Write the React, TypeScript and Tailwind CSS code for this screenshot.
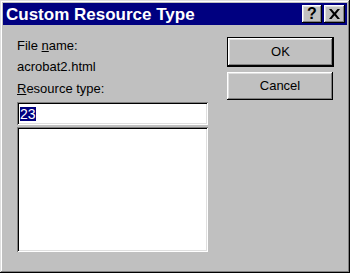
import React from "react";

const raised =
  "shadow-[inset_-1px_-1px_0_#000,inset_1px_1px_0_#fff,inset_-2px_-2px_0_#808080,inset_2px_2px_0_#dfdfdf]";

export default function App() {
  return (
    <div
      className="w-[350px] h-[273px] bg-[#c0c0c0] p-[3px] flex flex-col shadow-[inset_-1px_-1px_0_#000,inset_1px_1px_0_#dfdfdf,inset_-2px_-2px_0_#808080,inset_2px_2px_0_#fff]"
      style={{ fontFamily: '"Liberation Sans", Arial, sans-serif' }}
    >
      <div className="h-[22px] bg-[#000080] flex items-center pl-[3px] pr-[2px]">
        <span className="text-white font-bold text-[17px] leading-none">
          Custom Resource Type
        </span>
        <div className="ml-auto flex gap-[2px]">
          <div className={`w-[20px] h-[18px] bg-[#c0c0c0] ${raised} flex items-center justify-center text-black font-bold text-[16px] leading-none pb-[1px]`}>
            ?
          </div>
          <div className={`w-[21px] h-[18px] bg-[#c0c0c0] ${raised} flex items-center justify-center`}>
            <svg width="11" height="10" viewBox="0 0 11 10">
              <path d="M0 0h2.5l3 3.5 3-3.5H11L7 5l4 5H8.5l-3-3.5-3 3.5H0l4-5z" fill="#000" />
            </svg>
          </div>
        </div>
      </div>
      <div className="flex flex-1 pl-[14px] pt-[14px]">
        <div className="flex flex-col w-[191px] text-[13px] text-black leading-none">
          <div className="h-[13px]">
            File <span className="underline">n</span>ame:
          </div>
          <div className="h-[13px] mt-[8px]">acrobat2.html</div>
          <div className="h-[13px] mt-[9px]">
            <span className="underline">R</span>esource type:
          </div>
          <div className="mt-[7px] h-[23px] bg-white shadow-[inset_1px_1px_0_#808080,inset_-1px_-1px_0_#fff,inset_2px_2px_0_#000,inset_-2px_-2px_0_#dfdfdf] flex items-center pl-[3px]">
            <span className="bg-[#000080] text-white text-[14px] leading-[14px]">23</span>
          </div>
          <div className="mt-[2px] h-[125px] bg-white shadow-[inset_1px_1px_0_#808080,inset_-1px_-1px_0_#fff,inset_2px_2px_0_#000,inset_-2px_-2px_0_#dfdfdf]" />
        </div>
        <div className="ml-[19px] mt-[-2px] flex flex-col gap-[5px]">
          <div className="w-[107px] h-[30px] border border-black bg-[#c0c0c0]">
            <div className={`w-full h-full ${raised} flex items-center justify-center text-[13px]`}>OK</div>
          </div>
          <div className={`w-[106px] h-[28px] bg-[#c0c0c0] ${raised} flex items-center justify-center text-[13px]`}>
            Cancel
          </div>
        </div>
      </div>
    </div>
  );
}
